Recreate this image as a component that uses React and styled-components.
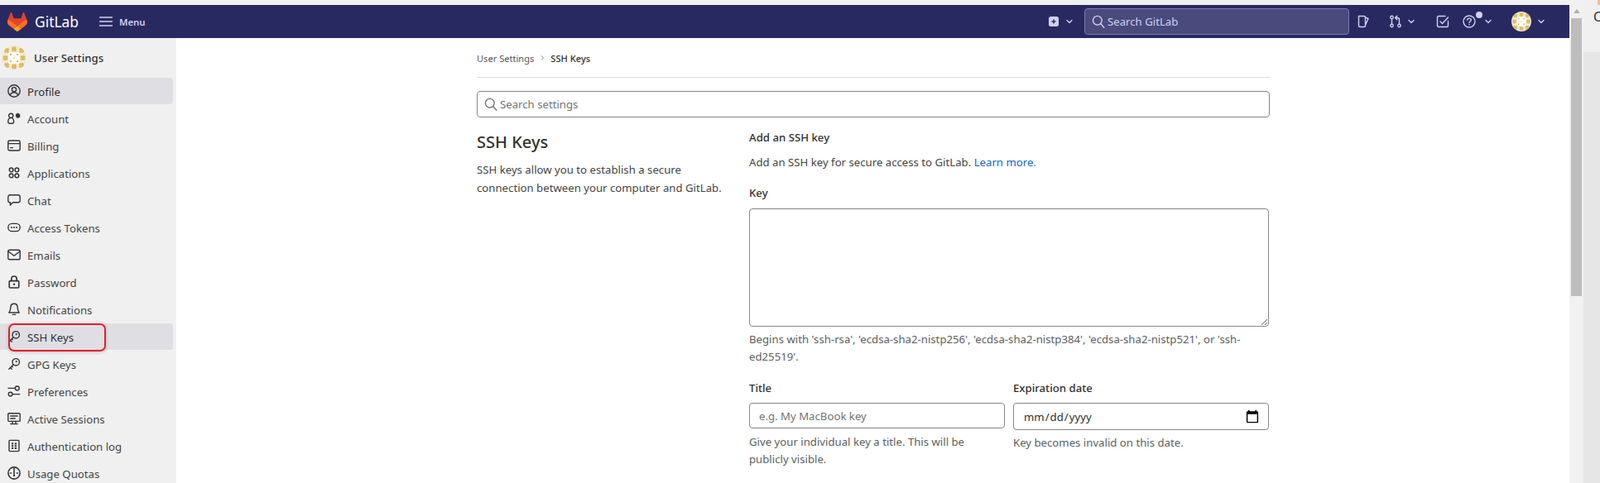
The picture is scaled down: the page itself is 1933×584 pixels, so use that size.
import React from "react";
import styled, { createGlobalStyle } from "styled-components";

const Global = createGlobalStyle`
  html, body { margin: 0; padding: 0; background: #fff; overflow: hidden; }
  * { box-sizing: border-box; }
  body { font-family: "Noto Sans", "Open Sans", "Liberation Sans", sans-serif; color: #303030; }
`;

const Frame = styled.div`
  display: flex;
  width: 1933px;
  height: 584px;
  overflow: hidden;
`;
const AppColumn = styled.div`
  width: 1896px;
  flex: none;
  display: flex;
  flex-direction: column;
`;
const TopStrip = styled.div`
  height: 6px;
  flex: none;
  background: #f0f0f0;
`;
const Navbar = styled.header`
  height: 40px;
  flex: none;
  background: #292961;
  display: flex;
  align-items: center;
  color: #d1d0f0;
`;
const Brand = styled.div`
  display: flex;
  align-items: center;
  padding-left: 9px;
  gap: 9px;
  width: 120px;
  color: #fff;
  font-size: 17.4px;
  line-height: 24px;
`;
const MenuButton = styled.div`
  display: flex;
  align-items: center;
  gap: 8px;
  font-size: 11.3px;
  font-weight: 600;
  color: #d1d0f0;
`;
const NavRight = styled.div`
  margin-left: auto;
  display: flex;
  align-items: center;
  height: 100%;
`;
const NavIcon = styled.span`
  display: inline-flex;
  align-items: center;
  flex: none;
  margin-left: ${(p) => p.$ml || 0}px;
  color: #d1d0f0;
  position: relative;
`;
const NavSearch = styled.div`
  width: 320px;
  height: 32px;
  margin-left: 13px;
  margin-right: 9px;
  display: flex;
  align-items: center;
  gap: 3px;
  padding-left: 8px;
  background: #4a4a7c;
  border: 1px solid #7b7bae;
  border-radius: 4px;
  color: #d1d0f0;
  font-size: 13.2px;
`;
const HelpDot = styled.span`
  position: absolute;
  width: 8px;
  height: 8px;
  border-radius: 50%;
  background: #d1d0f0;
  top: -4px;
  right: -8px;
`;
const Body = styled.div`
  flex: 1;
  min-height: 0;
  display: flex;
`;
const Sidebar = styled.aside`
  width: 213px;
  flex: none;
  background: #f0f0f0;
  overflow: hidden;
`;
const SidebarHead = styled.div`
  height: 48px;
  display: flex;
  align-items: center;
  padding-left: 2px;
  gap: 9px;
  font-size: 13.2px;
  font-weight: 500;
  color: #303030;
`;
const NavItem = styled.div`
  position: relative;
  height: 32px;
  margin: 0 4px 1px 0;
  padding-left: 9px;
  display: flex;
  align-items: center;
  gap: 8px;
  font-size: 13.2px;
  border-radius: 0 4px 4px 0;
  color: ${(p) => (p.$active ? "#303030" : "#444")};
  background: ${(p) => (p.$active ? "#dfdfe3" : "transparent")};
  svg { flex: none; color: #333; }
`;
const ItemLabel = styled.span`
  padding-top: 1px;
`;
const Callout = styled.span`
  position: absolute;
  left: 10px;
  top: 0;
  width: 118px;
  height: 34px;
  border: 2px solid #e41e2b;
  border-radius: 7px;
  box-shadow: 0 1px 4px rgba(0, 0, 0, 0.18);
`;
const Main = styled.main`
  flex: 1;
  min-width: 0;
  background: #fff;
`;
const Container = styled.div`
  width: 958px;
  margin-left: 363px;
`;
const Breadcrumb = styled.nav`
  height: 48px;
  display: flex;
  align-items: center;
  gap: 6px;
  padding-top: 1px;
  font-size: 11.1px;
  color: #555;
  border-bottom: 1px solid #dcdcde;
`;
const Crumb = styled.span`
  color: ${(p) => (p.$current ? "#303030" : "#555")};
  font-weight: ${(p) => (p.$current ? 500 : 400)};
`;
const SearchBox = styled.div`
  height: 32px;
  margin-top: 16px;
  display: flex;
  align-items: center;
  gap: 3px;
  padding-left: 8px;
  border: 1px solid #868686;
  border-radius: 4px;
  font-size: 13.2px;
  color: #737373;
`;
const Section = styled.section`
  display: grid;
  grid-template-columns: 329px 1fr;
  padding-top: 15px;
`;
const Intro = styled.div``;
const Title = styled.h2`
  margin: 0;
  font-size: 20px;
  line-height: 30px;
  font-weight: 500;
  color: #303030;
`;
const IntroText = styled.p`
  margin: 7px 0 0;
  font-size: 13.2px;
  line-height: 22px;
  color: #444;
`;
const FormColumn = styled.div`
  padding-right: 1px;
  margin-top: -1px;
`;
const FormTitle = styled.h4`
  margin: 0;
  font-size: 13.2px;
  line-height: 20px;
  font-weight: 500;
  color: #303030;
`;
const FormText = styled.p`
  margin: 10px 0 0;
  font-size: 13.2px;
  line-height: 20px;
  color: #444;
  a { color: #1068bf; text-decoration: none; }
`;
const Label = styled.label`
  display: block;
  font-size: 13.2px;
  line-height: 20px;
  font-weight: 500;
  color: #303030;
  margin-top: ${(p) => p.$mt || 0}px;
  margin-bottom: ${(p) => p.$mb || 8}px;
`;
const KeyArea = styled.textarea`
  display: block;
  width: 100%;
  height: 143px;
  border: 1px solid #868686;
  border-radius: 4px;
  background: #fff;
  font: inherit;
`;
const Hint = styled.p`
  margin: ${(p) => p.$mt || 5}px 0 0;
  font-size: 13.2px;
  line-height: 21px;
  color: #5e5e5e;
`;
const FieldRow = styled.div`
  display: grid;
  grid-template-columns: 1fr 1fr;
  gap: 10px;
  margin-top: 17px;
`;
const Field = styled.div``;
const TextInput = styled.input`
  display: block;
  width: 100%;
  height: ${(p) => (p.type === "date" ? 33 : 31)}px;
  padding: 0 11px;
  border: 1px solid #868686;
  border-radius: 4px;
  background: #fff;
  color: #303030;
  font-family: inherit;
  font-size: 13.2px;
  &::placeholder { color: #737373; opacity: 1; }
  &::-webkit-calendar-picker-indicator {
    width: 18px;
    height: 18px;
    padding: 0;
    margin-right: -1px;
  }
`;
const ScrollRail = styled.div`
  width: 17px;
  flex: none;
  background: #f1f1f1;
  padding: 11px 2px 0;
`;
const ScrollArrow = styled.div`
  width: 0;
  height: 0;
  margin: 0 auto 6px;
  border-left: 4px solid transparent;
  border-right: 4px solid transparent;
  border-bottom: 5px solid #b0b0b0;
`;
const ScrollThumb = styled.div`
  height: 336px;
  background: #bdbdbd;
`;
const SidePanel = styled.div`
  flex: 1;
  display: flex;
  flex-direction: column;
  min-width: 0;
  overflow: hidden;
`;
const SideHead = styled.div`
  height: 63px;
  flex: none;
  background: #f0f0f0;
  position: relative;
  padding: 10px 0 0 12px;
  font-size: 16px;
  line-height: 20px;
  color: #333;
  white-space: nowrap;
`;
const SideTab = styled.span`
  position: absolute;
  top: 0;
  right: 0;
  width: 3px;
  height: 6px;
  background: #f0c284;
`;
const SideRest = styled.div`
  flex: 1;
  background: #e6e6e6;
`;

const Icon = ({ children, size = 16, vb = "0 0 16 16", sw = 1.4 }) => (
  <svg width={size} height={size} viewBox={vb} fill="none" stroke="currentColor" strokeWidth={sw} strokeLinecap="round" strokeLinejoin="round">
    {children}
  </svg>
);

const Tanuki = () => (
  <svg width="24" height="23" viewBox="0 0 25 24">
    <path fill="#E24329" d="m24.507 9.5-.034-.09L21.082.562a.896.896 0 0 0-1.694.091l-2.29 7.01H7.825L5.535.653a.898.898 0 0 0-1.694-.09L.451 9.411.416 9.5a6.297 6.297 0 0 0 2.09 7.278l.012.01.03.022 5.16 3.867 2.56 1.935 1.554 1.176a1.051 1.051 0 0 0 1.268 0l1.555-1.176 2.56-1.935 5.197-3.89.014-.01A6.297 6.297 0 0 0 24.507 9.5Z" />
    <path fill="#FC6D26" d="m24.507 9.5-.034-.09a11.44 11.44 0 0 0-4.56 2.051l-7.447 5.632 4.742 3.584 5.197-3.89.014-.01A6.297 6.297 0 0 0 24.507 9.5Z" />
    <path fill="#FCA326" d="m7.707 20.677 2.56 1.935 1.555 1.176a1.051 1.051 0 0 0 1.268 0l1.555-1.176 2.56-1.935-4.743-3.584-4.755 3.584Z" />
    <path fill="#FC6D26" d="M5.01 11.461a11.43 11.43 0 0 0-4.56-2.05L.416 9.5a6.297 6.297 0 0 0 2.09 7.278l.012.01.03.022 5.16 3.867 4.745-3.584-7.444-5.632Z" />
  </svg>
);

const Avatar = ({ size, clip }) => {
  const cross = (x, y, k) => (
    <g key={k} stroke="#d9b85f" strokeWidth="1.1">
      <path d={`M${x - 3} ${y}h6M${x} ${y - 3}v6M${x - 3} ${y - 1.5}h6M${x - 3} ${y + 1.5}h6M${x - 1.5} ${y - 3}v6M${x + 1.5} ${y - 3}v6`} />
    </g>
  );
  return (
    <svg width={size} height={size} viewBox="0 0 30 30" style={{ flex: "none" }}>
      <defs>
        <clipPath id={clip}>
          <circle cx="15" cy="15" r="15" />
        </clipPath>
      </defs>
      <g clipPath={`url(#${clip})`}>
        <rect width="30" height="30" fill="#f3ead0" />
        <rect x="8" y="8" width="14" height="14" fill="#fbf9f2" />
        {cross(15, 4.5, "t")}
        {cross(15, 25.5, "b")}
        {cross(4.5, 15, "l")}
        {cross(25.5, 15, "r")}
        {cross(6, 6, "a")}
        {cross(24, 6, "c")}
        {cross(6, 24, "d")}
        {cross(24, 24, "e")}
        <g fill="#c9a94e">
          <circle cx="11" cy="11" r="1" />
          <circle cx="19" cy="11" r="1" />
          <circle cx="11" cy="19" r="1" />
          <circle cx="19" cy="19" r="1" />
          <circle cx="15" cy="15" r=".7" />
        </g>
      </g>
    </svg>
  );
};

const KeyGlyph = () => (
  <Icon>
    <circle cx="10.2" cy="5.8" r="4.2" />
    <path d="M7.2 8.8 1.8 14.2M3.4 12.6l1.8 1.6M5.2 10.8l1 1" />
    <circle cx="10.7" cy="5.2" r=".4" fill="currentColor" />
  </Icon>
);

const icons = {
  profile: (
    <Icon>
      <circle cx="8" cy="8" r="7.2" />
      <circle cx="8" cy="6.2" r="2.6" />
      <path d="M3.4 13.2c.6-2.2 2.4-3.4 4.6-3.4s4 1.2 4.6 3.4" />
    </Icon>
  ),
  account: (
    <Icon>
      <circle cx="4.2" cy="4.8" r="2.6" />
      <path d="M.8 11.4c0-2 1.4-3.800 3.400-3.800s3.400 1.800 3.400 3.800v.8c0 1.200-.9 2-2 2H2.800c-1.100 0-2-.8-2-2z" />
      <path fill="currentColor" stroke="none" d="M12 1.200l.9 1.100 1.400-.2.3 1.400 1.200.7-.7 1.200.3 1.400-1.400.3-.9 1.100-1.100-.9-1.400.1-.1-1.400-1.100-.9.9-1.100-.2-1.400 1.400-.2z" />
    </Icon>
  ),
  billing: (
    <Icon>
      <rect x=".8" y="2" width="14.4" height="12" rx="2" />
      <path d="M1 5.600h14M3.600 10.600h3" />
    </Icon>
  ),
  applications: (
    <Icon sw={1.5}>
      <circle cx="4.600" cy="4.400" r="2.300" />
      <circle cx="11.400" cy="4.400" r="2.300" />
      <circle cx="4.600" cy="11.400" r="2.300" />
      <circle cx="11.400" cy="11.400" r="2.300" />
    </Icon>
  ),
  chat: (
    <Icon>
      <path d="M3 1.800h10c1.200 0 2.200 1 2.200 2.200v4.600c0 1.200-1 2.200-2.200 2.200H6.600L3.400 14v-3.200H3C1.800 10.800.8 9.800.8 8.600V4C.8 2.800 1.800 1.800 3 1.800z" />
    </Icon>
  ),
  tokens: (
    <Icon>
      <rect x=".8" y="3.400" width="14.400" height="9.200" rx="4.600" />
      <g fill="currentColor" stroke="none">
        <circle cx="5" cy="8" r="1" />
        <circle cx="8" cy="8" r="1" />
        <circle cx="11" cy="8" r="1" />
      </g>
    </Icon>
  ),
  emails: (
    <Icon>
      <rect x=".8" y="2.200" width="14.400" height="11.600" rx="1.800" />
      <path d="m1 4 7 5.200L15 4" />
    </Icon>
  ),
  password: (
    <Icon sw={1.6}>
      <rect x="2.200" y="6.600" width="11.600" height="8.400" rx="1.200" />
      <path d="M4.800 6.400V4.200C4.800 2.400 6.200 1 8 1s3.200 1.400 3.200 3.200v2.200" />
      <circle cx="8" cy="10.800" r="1.200" fill="currentColor" stroke="none" />
    </Icon>
  ),
  notifications: (
    <Icon>
      <path d="M8 1.200c2.600 0 4.200 2 4.200 4.600 0 3.600 1.200 5 2 6.200H1.800c.8-1.200 2-2.600 2-6.200C3.800 3.200 5.400 1.200 8 1.200z" />
      <path d="M6.400 14.400h3.200" />
    </Icon>
  ),
  key: <KeyGlyph />,
  preferences: (
    <Icon>
      <circle cx="11.800" cy="4.400" r="2.400" />
      <circle cx="3.600" cy="11.600" r="2.400" />
      <path d="M1 4.400h8M14.800 11.600H6.400" />
    </Icon>
  ),
  sessions: (
    <Icon>
      <rect x=".8" y="1.800" width="14.400" height="9.600" rx="1" />
      <path d="M3.800 5h8.400M3.800 8h5.400M6 11.400v3M10 11.400v3M3.800 14.600h8.400" />
    </Icon>
  ),
  log: (
    <Icon>
      <rect x="2" y="1.400" width="12" height="13.200" rx="1" />
      <g fill="currentColor" stroke="none">
        <rect x="5" y="4.400" width="2.200" height="2" />
        <rect x="8.800" y="4.400" width="2.200" height="2" />
        <rect x="5" y="7.200" width="2.200" height="2" />
        <rect x="8.800" y="7.200" width="2.200" height="2" />
        <rect x="5" y="10" width="2.200" height="2" />
        <rect x="8.800" y="10" width="2.200" height="2" />
      </g>
    </Icon>
  ),
  usage: (
    <Icon sw={1.6}>
      <circle cx="8" cy="8" r="7.100" />
      <path d="M8 4v5.200" />
      <circle cx="8" cy="11" r="1.200" fill="currentColor" stroke="none" />
      <path d="M3.600 8h1M11.400 8h1M8 2.600v.6" />
    </Icon>
  ),
};

const navItems = [
  ["Profile", "profile", true],
  ["Account", "account"],
  ["Billing", "billing"],
  ["Applications", "applications"],
  ["Chat", "chat"],
  ["Access Tokens", "tokens"],
  ["Emails", "emails"],
  ["Password", "password"],
  ["Notifications", "notifications"],
  ["SSH Keys", "key", true, true],
  ["GPG Keys", "key"],
  ["Preferences", "preferences"],
  ["Active Sessions", "sessions"],
  ["Authentication log", "log"],
  ["Usage Quotas", "usage"],
];

const Chevron = ({ ml }) => (
  <NavIcon $ml={ml}>
    <svg width="10" height="10" viewBox="0 0 10 10" fill="none" stroke="currentColor" strokeWidth="1.3" strokeLinecap="round" strokeLinejoin="round">
      <path d="m2 3.500 3 3 3-3" />
    </svg>
  </NavIcon>
);

const Magnifier = ({ size = 16 }) => (
  <Icon size={size} sw={1.4}>
    <circle cx="6.800" cy="6.800" r="5.400" />
    <path d="m10.800 10.800 4 4.400" />
  </Icon>
);

export default function App() {
  return (
    <Frame>
      <Global />
      <AppColumn>
        <TopStrip />
        <Navbar>
          <Brand>
            <Tanuki />
            GitLab
          </Brand>
          <MenuButton>
            <Icon>
              <path d="M.500 3h15M.500 8h15M.500 13h15" />
            </Icon>
            Menu
          </MenuButton>
          <NavRight>
            <NavIcon>
              <svg width="12" height="12" viewBox="0 0 12 12">
                <rect width="12" height="12" rx="2.500" fill="#d1d0f0" />
                <path d="M6 3.500v5M3.500 6h5" stroke="#292961" strokeWidth="1.5" />
              </svg>
            </NavIcon>
            <Chevron ml={8} />
            <NavSearch>
              <Magnifier />
              Search GitLab
            </NavSearch>
            <NavIcon>
              <Icon>
                <path d="M2.500 1.500h6.500c1 0 1.500.5 1.500 1.500v10c0 1-.5 1.500-1.500 1.500h-5c-1 0-1.500-.5-1.500-1.500zM10.500 3l3.500 1.500-3.500 8" />
              </Icon>
            </NavIcon>
            <NavIcon $ml={23}>
              <Icon>
                <circle cx="3.500" cy="3" r="1.700" />
                <circle cx="3.500" cy="13" r="1.700" />
                <circle cx="12.500" cy="13" r="1.700" />
                <path d="M3.500 4.800v6.400M12.500 11.200V6c0-1.500-.8-2.500-2.300-2.500H8M9.800 1.200 7.500 3.500l2.300 2.300" />
              </Icon>
            </NavIcon>
            <Chevron ml={6} />
            <NavIcon $ml={25}>
              <Icon>
                <path d="M14.500 7.500v5.500c0 1-.5 1.500-1.500 1.500H3c-1 0-1.500-.5-1.500-1.500V3c0-1 .5-1.500 1.500-1.500h8" />
                <path d="m5 8 2.500 2.500L14.500 3" />
              </Icon>
            </NavIcon>
            <NavIcon $ml={16}>
              <Icon>
                <circle cx="8" cy="8" r="7" />
                <path d="M5.800 6.200c0-1.200 1-2.100 2.200-2.100s2.200.9 2.200 2.100c0 1.800-2.200 1.800-2.200 3.400" />
                <circle cx="8" cy="11.800" r=".8" fill="currentColor" stroke="none" />
              </Icon>
              <HelpDot />
            </NavIcon>
            <Chevron ml={10} />
            <NavIcon $ml={23}>
              <Avatar size={24} clip="avatar-nav" />
            </NavIcon>
            <Chevron ml={7} />
            <NavIcon $ml={29} />
          </NavRight>
        </Navbar>
        <Body>
          <Sidebar>
            <SidebarHead>
              <Avatar size={30} clip="avatar-side" />
              User Settings
            </SidebarHead>
            {navItems.map(([label, icon, active, marked]) => (
              <NavItem key={label} $active={active}>
                {icons[icon]}
                <ItemLabel>{label}</ItemLabel>
                {marked && <Callout />}
              </NavItem>
            ))}
          </Sidebar>
          <Main>
            <Container>
              <Breadcrumb>
                <Crumb>User Settings</Crumb>
                <svg width="8" height="8" viewBox="0 0 8 8" fill="none" stroke="#888" strokeWidth="1">
                  <path d="m3 1.500 2.500 2.500L3 6.500" />
                </svg>
                <Crumb $current>SSH Keys</Crumb>
              </Breadcrumb>
              <SearchBox>
                <Magnifier />
                Search settings
              </SearchBox>
              <Section>
                <Intro>
                  <Title>SSH Keys</Title>
                  <IntroText>
                    SSH keys allow you to establish a secure
                    <br />
                    connection between your computer and GitLab.
                  </IntroText>
                </Intro>
                <FormColumn>
                  <FormTitle>Add an SSH key</FormTitle>
                  <FormText>
                    Add an SSH key for secure access to GitLab. <a href="#learn">Learn more.</a>
                  </FormText>
                  <Label $mt={17} $mb={9}>Key</Label>
                  <KeyArea aria-label="Key" />
                  <Hint>
                    Begins with 'ssh-rsa', 'ecdsa-sha2-nistp256', 'ecdsa-sha2-nistp384', 'ecdsa-sha2-nistp521', or 'ssh-ed25519'.
                  </Hint>
                  <FieldRow>
                    <Field>
                      <Label>Title</Label>
                      <TextInput placeholder="e.g. My MacBook key" />
                      <Hint $mt={6}>Give your individual key a title. This will be publicly visible.</Hint>
                    </Field>
                    <Field>
                      <Label>Expiration date</Label>
                      <TextInput type="date" aria-label="Expiration date" />
                      <Hint $mt={5}>Key becomes invalid on this date.</Hint>
                    </Field>
                  </FieldRow>
                </FormColumn>
              </Section>
            </Container>
          </Main>
        </Body>
      </AppColumn>
      <ScrollRail>
        <ScrollArrow />
        <ScrollThumb />
      </ScrollRail>
      <SidePanel>
        <SideHead>
          C
          <SideTab />
        </SideHead>
        <SideRest />
      </SidePanel>
    </Frame>
  );
}
